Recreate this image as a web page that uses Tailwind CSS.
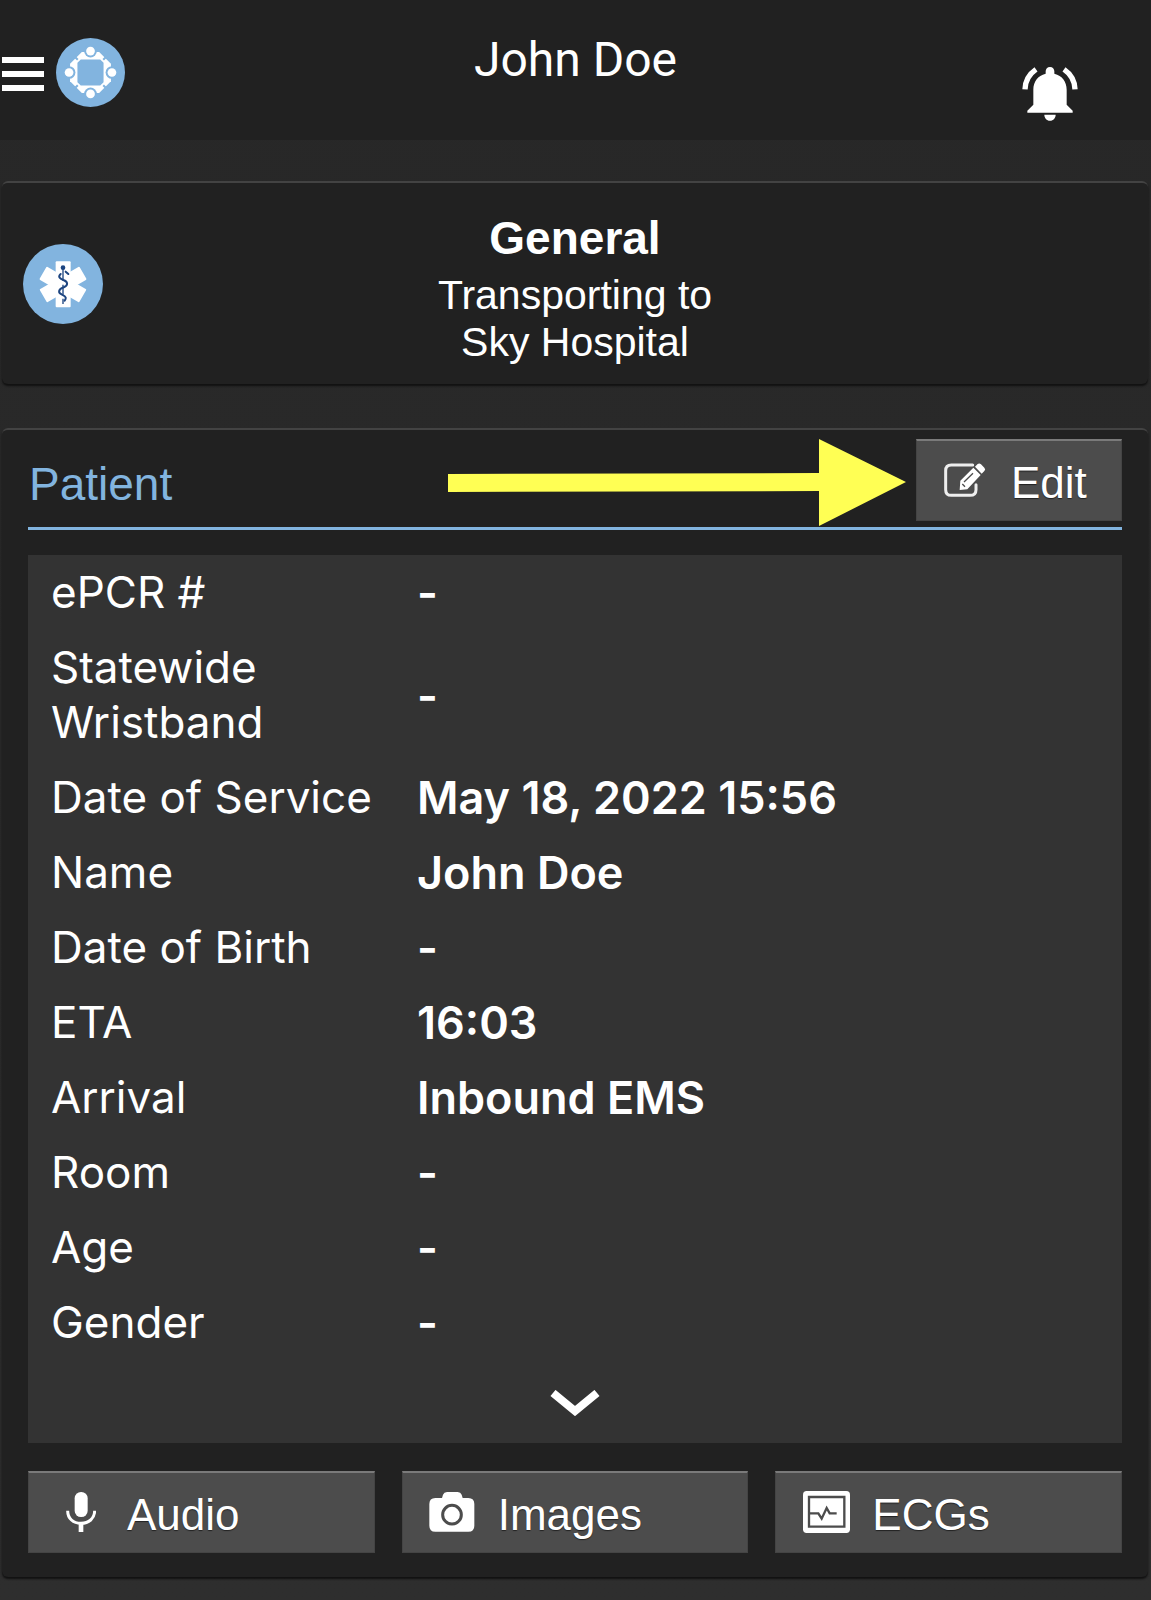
<!DOCTYPE html>
<html lang="en">
<head>
  <meta charset="UTF-8" />
  <meta name="viewport" content="width=device-width, initial-scale=1" />
  <title>John Doe</title>
  <script src="https://cdn.jsdelivr.net/npm/@tailwindcss/browser@4"></script>
</head>
<body class="min-h-screen bg-linear-to-b from-[#272727] to-[#2e2e2e] text-white font-['Liberation_Sans',sans-serif]">

  <!-- Header -->
  <header class="h-[140px] bg-[#212121] grid grid-cols-[1fr_auto_1fr]">
    <div class="flex items-center gap-3 h-[145px] pl-[2px]">
      <button type="button" aria-label="Menu" class="w-[42px] flex flex-col gap-2 pt-[2px]">
        <span class="h-[6px] w-full bg-white"></span>
        <span class="h-[6px] w-full bg-white"></span>
        <span class="h-[6px] w-full bg-white"></span>
      </button>
      <a href="#" aria-label="Home">
        <svg class="size-[69px]" viewBox="-103 -103 206 206">
          <defs>
            <g id="person">
              <circle cy="-64" r="19" fill="#82b4df" />
              <circle cy="-64" r="13" fill="#fff" />
            </g>
          </defs>
          <circle r="103" fill="#82b4df" />
          <path fill="#fff" d="M-26-61H26L61-26V26L26 61H-26L-61 26V-26Z" />
          <path fill="#82b4df" d="M-29-39H29L39-29V29L29 39H-29L-39 29V-29Z" />
          <path fill="none" stroke="#82b4df" stroke-width="6" d="M38-38L50-50M-38-38L-50-50M38 38L50 50M-38 38L-50 50" />
          <use href="#person" />
          <use href="#person" transform="rotate(90)" />
          <use href="#person" transform="rotate(180)" />
          <use href="#person" transform="rotate(270)" />
        </svg>
      </a>
    </div>
    <h1 class="pt-6 text-[48px] leading-[72px] font-['Roboto',sans-serif]">John Doe</h1>
    <div class="flex justify-end pt-[66px] pr-[73px]">
      <button type="button" aria-label="Notifications" class="size-[56px]">
        <svg class="size-full" viewBox="0 0 168 168" fill="#fff">
          <path d="M84 3c8 0 13 6 13 13v7c24 6 37 24 37 48v45l18 18v6H16v-6l18-18V71c0-24 13-42 37-48v-7c0-7 5-13 13-13zM67 146h34c0 10-7 18-17 18s-17-8-17-18z" />
          <path fill="none" stroke="#fff" stroke-width="16" d="M42 10Q10 32 9 70M126 10Q158 32 159 70" />
        </svg>
      </button>
    </div>
  </header>

  <main class="pl-[2px] pr-[3px] pt-[41px] pb-6 flex flex-col gap-[44px]">

    <!-- Transport -->
    <section class="relative bg-[#212121] border-t-2 border-[#434343] rounded-md shadow-[0_2px_2px_#111] pt-[25px] pb-[18px] text-center">
      <svg class="absolute left-[21px] top-[61px] size-[80px]" viewBox="0 0 240 240">
        <circle cx="120" cy="120" r="120" fill="#82b4df" />
        <g fill="#fff">
          <rect x="98" y="52" width="45" height="138" rx="3" />
          <rect x="98" y="52" width="45" height="138" rx="3" transform="rotate(60 120 121)" />
          <rect x="98" y="52" width="45" height="138" rx="3" transform="rotate(120 120 121)" />
        </g>
        <circle cx="120" cy="71" r="7" fill="#1d4580" />
        <path d="M120 74V110M120 122V152M120 164V180" fill="none" stroke="#1d4580" stroke-width="4" />
        <path d="M136 90L128 83M113 90C104 98 110 104 121 108C136 113 135 124 124 129C105 136 104 146 117 152C131 158 130 163 125 170" fill="none" stroke="#1d4580" stroke-width="6" stroke-linecap="round" />
      </svg>
      <h2 class="text-[46px] leading-[60px] font-bold">General</h2>
      <p class="mt-1 text-[41px] leading-[47px]">Transporting to<br>Sky Hospital</p>
    </section>

    <!-- Patient -->
    <section class="bg-[#212121] border-t-2 border-[#434343] rounded-md shadow-[0_2px_2px_#111] px-[26px] pt-[9px] pb-6">
      <div class="relative flex items-start justify-between h-[91px] border-b-3 border-[#82b4df]">
        <h2 class="text-[46px] leading-[56px] text-[#82b4df] pt-[17px] pl-px">Patient</h2>
        <svg class="absolute right-[216px] top-0 w-[458px] h-[88px]" viewBox="0 0 458 88" fill="#ffff54">
          <path d="M0 35L371 34V0L458 43L371 87V52L0 53Z" />
        </svg>
        <button type="button" class="h-[82px] w-[206px] flex items-center gap-[25px] pl-[27px] pb-[2px] bg-[#4c4c4c] border border-t-2 border-[#444] border-t-[#7a7a7a] text-[44px] [text-shadow:0_1px_1px_#222]">
          <svg class="w-[42px] h-[36px]" viewBox="0 0 126 108">
            <path d="M86 9H22Q5 9 5 26V83Q5 100 22 100H78Q96 100 96 83V68" fill="none" stroke="#eee" stroke-width="9" stroke-linecap="round" />
            <path d="M47 84L49 56L88 17L110 39L70 82ZM93 14L101 6Q106 2 111 7L121 17Q126 22 121 27L113 35Z" fill="#fff" />
            <path d="M60 60L87 34M55 66L63 74" stroke="#4c4c4c" stroke-width="4" />
          </svg>
          <span class="pt-[6px]">Edit</span>
        </button>
      </div>

      <div class="mt-[25px] bg-[#333] pb-[27px]">
        <table class="w-full text-left leading-[55px] font-['Inter',sans-serif]">
          <tbody>
            <tr>
              <th scope="row" class="w-[389px] py-[10px] pl-[23px] pr-10 text-[44px] font-normal">ePCR #</th>
              <td class="py-[10px] text-[45px] font-semibold">-</td>
            </tr>
            <tr>
              <th scope="row" class="py-[10px] pl-[23px] pr-10 text-[44px] font-normal">Statewide Wristband</th>
              <td class="py-[10px] text-[45px] font-semibold">-</td>
            </tr>
            <tr>
              <th scope="row" class="py-[10px] pl-[23px] text-[44px] font-normal">Date of Service</th>
              <td class="py-[10px] text-[45px] font-semibold">May 18, 2022 15:56</td>
            </tr>
            <tr>
              <th scope="row" class="py-[10px] pl-[23px] text-[44px] font-normal">Name</th>
              <td class="py-[10px] text-[45px] font-semibold">John Doe</td>
            </tr>
            <tr>
              <th scope="row" class="py-[10px] pl-[23px] text-[44px] font-normal">Date of Birth</th>
              <td class="py-[10px] text-[45px] font-semibold">-</td>
            </tr>
            <tr>
              <th scope="row" class="py-[10px] pl-[23px] text-[44px] font-normal">ETA</th>
              <td class="py-[10px] text-[45px] font-semibold">16:03</td>
            </tr>
            <tr>
              <th scope="row" class="py-[10px] pl-[23px] text-[44px] font-normal">Arrival</th>
              <td class="py-[10px] text-[45px] font-semibold">Inbound EMS</td>
            </tr>
            <tr>
              <th scope="row" class="py-[10px] pl-[23px] text-[44px] font-normal">Room</th>
              <td class="py-[10px] text-[45px] font-semibold">-</td>
            </tr>
            <tr>
              <th scope="row" class="py-[10px] pl-[23px] text-[44px] font-normal">Age</th>
              <td class="py-[10px] text-[45px] font-semibold">-</td>
            </tr>
            <tr>
              <th scope="row" class="py-[10px] pl-[23px] text-[44px] font-normal">Gender</th>
              <td class="py-[10px] text-[45px] font-semibold">-</td>
            </tr>
          </tbody>
        </table>
        <button type="button" aria-label="Show more" class="block mx-auto mt-[30px]">
          <svg class="w-[50px] h-[26px]" viewBox="0 0 50 26">
            <path d="M3 3L25 21L47 3" fill="none" stroke="#fff" stroke-width="8" />
          </svg>
        </button>
      </div>

      <!-- Attachments -->
      <div class="mt-[28px] grid grid-cols-3 gap-[27px]">
        <button type="button" class="h-[82px] flex items-center gap-[31px] pl-[37px] pb-[2px] bg-[#4c4c4c] border border-t-2 border-[#444] border-t-[#7a7a7a] text-[44px] [text-shadow:0_1px_1px_#222]">
          <svg class="w-[30px] h-[40px]" viewBox="0 0 90 120" fill="#fff">
            <rect x="26" y="0" width="39" height="75" rx="19" />
            <path d="M5 56C5 80 22 94 45 94S86 80 86 56" fill="none" stroke="#fff" stroke-width="9" />
            <path d="M38 94H52V120H38Z" />
          </svg>
          <span class="pt-[6px]">Audio</span>
        </button>
        <button type="button" class="h-[82px] flex items-center gap-[23px] pl-[26px] pb-[2px] bg-[#4c4c4c] border border-t-2 border-[#444] border-t-[#7a7a7a] text-[44px] [text-shadow:0_1px_1px_#222]">
          <svg class="w-[46px] h-[40px]" viewBox="0 0 138 120" fill="#fff">
            <path d="M39 18L42 8Q45 0 54 0H86Q95 0 98 8L101 18H118Q136 18 136 36V101Q136 119 118 119H19Q1 119 1 101V36Q1 18 19 18Z" />
            <circle cx="69" cy="68" r="28" fill="none" stroke="#4c4c4c" stroke-width="9" />
          </svg>
          <span class="pt-[6px]">Images</span>
        </button>
        <button type="button" class="h-[82px] flex items-center gap-[22px] pl-[27px] pb-[2px] bg-[#4c4c4c] border border-t-2 border-[#444] border-t-[#7a7a7a] text-[44px] [text-shadow:0_1px_1px_#222]">
          <svg class="w-[47px] h-[42px]" viewBox="0 0 141 126">
            <rect width="141" height="126" rx="11" fill="#fff" />
            <path d="M18 18H124V107H18ZM20 67H46L56 83L71 51L80 67H101" fill="none" stroke="#4c4c4c" stroke-width="7" />
          </svg>
          <span class="pt-[6px]">ECGs</span>
        </button>
      </div>
    </section>
  </main>
</body>
</html>
